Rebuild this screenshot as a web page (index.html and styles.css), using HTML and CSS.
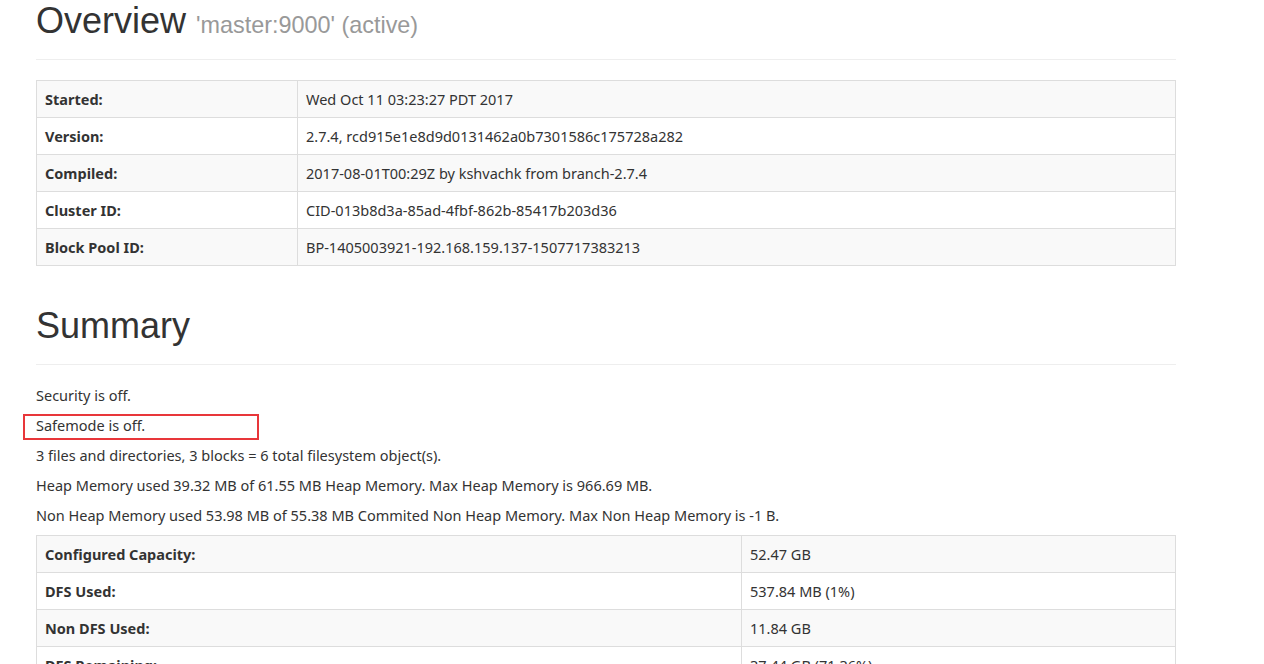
FILE: index.html
```html
<!DOCTYPE html>
<html>
<head>
<meta charset="utf-8">
<title>Namenode information</title>
<link rel="stylesheet" href="styles.css">
</head>
<body>
<div class="container">
  <div class="page-header first">
    <h1>Overview <small>'master:9000' (active)</small></h1>
  </div>
  <table class="table info">
    <tbody>
      <tr><th>Started:</th><td>Wed Oct 11 03:23:27 PDT 2017</td></tr>
      <tr><th>Version:</th><td>2.7.4, rcd915e1e8d9d0131462a0b7301586c175728a282</td></tr>
      <tr><th>Compiled:</th><td>2017-08-01T00:29Z by kshvachk from branch-2.7.4</td></tr>
      <tr><th>Cluster ID:</th><td>CID-013b8d3a-85ad-4fbf-862b-85417b203d36</td></tr>
      <tr><th>Block Pool ID:</th><td>BP-1405003921-192.168.159.137-1507717383213</td></tr>
    </tbody>
  </table>

  <div class="page-header">
    <h1>Summary</h1>
  </div>
  <p>Security is off.</p>
  <p class="marked">Safemode is off.<span class="mark-box"></span></p>
  <p>3 files and directories, 3 blocks = 6 total filesystem object(s).</p>
  <p>Heap Memory used 39.32 MB of 61.55 MB Heap Memory. Max Heap Memory is 966.69 MB.</p>
  <p>Non Heap Memory used 53.98 MB of 55.38 MB Commited Non Heap Memory. Max Non Heap Memory is -1 B.</p>
  <table class="table summary">
    <tbody>
      <tr><th>Configured Capacity:</th><td>52.47 GB</td></tr>
      <tr><th>DFS Used:</th><td>537.84 MB (1%)</td></tr>
      <tr><th>Non DFS Used:</th><td>11.84 GB</td></tr>
      <tr><th>DFS Remaining:</th><td>37.44 GB (71.36%)</td></tr>
      <tr><th>Block Pool Used:</th><td>537.84 MB (1%)</td></tr>
    </tbody>
  </table>
</div>
</body>
</html>
```
FILE: styles.css
```css
html, body {
  margin: 0;
  padding: 0;
  background: #fff;
}
body {
  font-family: "Noto Sans", "Open Sans", sans-serif;
  font-size: 14.5px;
  line-height: 20px;
  color: #333;
}
.container {
  width: 1140px;
  padding: 0 15px;
  margin-left: 21px;
}
.page-header {
  margin: 40px 0 20px;
  padding-bottom: 9px;
  border-bottom: 1px solid #eee;
}
.page-header.first {
  margin-top: 0;
}
h1 {
  font-family: "Liberation Sans", Arial, sans-serif;
  font-size: 36px;
  font-weight: 500;
  line-height: 1.1;
  margin: 20px 0 10px;
  color: #333;
}
.page-header.first h1 {
  margin-top: 0;
  padding-top: 1px;
  margin-bottom: 9px;
}
h1 small {
  font-size: 65%;
  font-weight: normal;
  color: #999;
}
p {
  margin: 0 0 10px;
}
.marked {
  position: relative;
}
.mark-box {
  position: absolute;
  left: -13px;
  top: -1px;
  width: 232px;
  height: 22px;
  border: 2px solid #e8363a;
}
.table {
  width: 100%;
  border-collapse: collapse;
  border-spacing: 0;
  border: 1px solid #ddd;
  margin-bottom: 20px;
}
.table th, .table td {
  padding: 8px;
  line-height: 20px;
  text-align: left;
  vertical-align: top;
  border: 1px solid #ddd;
}
.table th {
  font-weight: bold;
}
.table tr:nth-child(odd) {
  background: #f9f9f9;
}
.info th {
  width: 244px;
}
.summary th {
  width: 688px;
}
```
